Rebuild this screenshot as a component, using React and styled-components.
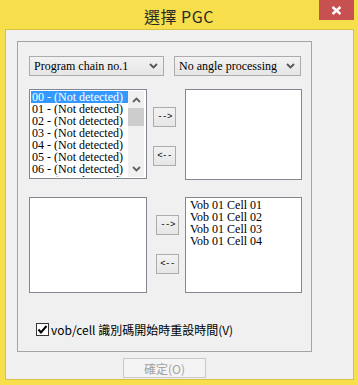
import React from "react";
import styled, { createGlobalStyle } from "styled-components";

const Global = createGlobalStyle`
  html, body { margin: 0; padding: 0; overflow: hidden; }
  body { font-family: "Noto Sans CJK TC", "Liberation Sans", sans-serif; }
  * { box-sizing: border-box; }
`;

const Window = styled.div`
  width: 358px;
  height: 385px;
  background: #f6df4a;
  display: flex;
  flex-direction: column;
  padding: 0 4px 5px 5px;
`;

const TitleBar = styled.div`
  height: 29px;
  display: grid;
  grid-template-columns: 35px 1fr 35px;
  align-items: start;
  margin: 0 -4px 0 -5px;
  padding: 0 4px 0 4px;
`;

const Title = styled.div`
  grid-column: 2;
  text-align: center;
  font-family: "Noto Sans CJK TC", "Liberation Sans", sans-serif;
  font-size: 16px;
  line-height: 16px;
  padding-top: 8px;
  color: #2b2b2b;
  letter-spacing: 0.5px;
`;

const CloseButton = styled.div`
  grid-column: 3;
  width: 35px;
  height: 20px;
  background: #c75050;
  display: flex;
  align-items: center;
  justify-content: center;
`;

const Client = styled.div`
  flex: 1;
  background: #f0f0f0;
  border: 1px solid #d8c243;
  padding: 11px 0 0 11px;
  display: flex;
  flex-direction: column;
  width: 349px;
`;

const GroupBox = styled.div`
  width: 295px;
  height: 311px;
  border: 1px solid #a5a5a5;
  padding: 14px 0 0 11px;
  display: flex;
  flex-direction: column;
`;

const ComboRow = styled.div`
  display: flex;
  gap: 10px;
`;

const Combo = styled.div`
  width: ${(p) => p.$w}px;
  height: 20px;
  border: 1px solid #acacac;
  background: linear-gradient(#f2f2f2, #e6e6e6);
  display: flex;
  align-items: center;
  justify-content: space-between;
  padding: 0 5px 0 4px;
  font-family: "Liberation Serif", "Noto Sans CJK TC", serif;
  font-size: 12px;
  color: #000;
`;

const ListRow = styled.div`
  display: flex;
  margin-top: ${(p) => p.$mt}px;
  align-items: flex-start;
`;

const ListBox = styled.div`
  width: ${(p) => p.$w}px;
  height: ${(p) => p.$h}px;
  border: 1px solid #828790;
  background: #fff;
  padding: 1px;
  display: flex;
  overflow: hidden;
  font-family: "Liberation Serif", "Noto Sans CJK TC", serif;
  font-size: 12px;
  color: #000;
`;

const Items = styled.div`
  flex: 1;
  display: flex;
  flex-direction: column;
  overflow: hidden;
  padding-left: ${(p) => p.$pl || 0}px;
`;

const Item = styled.div`
  height: 12px;
  line-height: 12px;
  flex-shrink: 0;
  padding-left: 1px;
  white-space: nowrap;
  overflow: hidden;
  background: ${(p) => (p.$sel ? "#3399ff" : "transparent")};
  color: ${(p) => (p.$sel ? "#fff" : "#000")};
`;

const ScrollBar = styled.div`
  width: 16px;
  background: #f0f0f0;
  display: flex;
  flex-direction: column;
  margin-right: 1px;
`;

const ScrollArrow = styled.div`
  height: 17px;
  display: flex;
  align-items: center;
  justify-content: center;
`;

const ScrollTrack = styled.div`
  flex: 1;
  display: flex;
  flex-direction: column;
`;

const Thumb = styled.div`
  height: 18px;
  background: #cdcdcd;
`;

const ButtonCol = styled.div`
  display: flex;
  flex-direction: column;
  gap: 19px;
  padding-top: 18px;
  margin: 0 ${(p) => p.$mr}px 0 ${(p) => p.$ml}px;
`;

const MoveButton = styled.div`
  width: 23px;
  height: 20px;
  border: 1px solid #acacac;
  background: linear-gradient(#f2f2f2, #e6e6e6);
  display: flex;
  align-items: center;
  justify-content: center;
  font-family: "Liberation Mono", monospace;
  font-size: 9px;
  color: #000;
  letter-spacing: -0.5px;
`;

const CheckRow = styled.label`
  display: flex;
  align-items: center;
  gap: 2px;
  margin-top: 30px;
  padding-left: 7px;
  font-family: "Noto Sans CJK TC", "Liberation Sans", sans-serif;
  font-size: 12px;
  line-height: 13px;
  color: #000;
`;

const CheckBox = styled.div`
  width: 13px;
  height: 13px;
  border: 1px solid #333;
  background: #fff;
  display: flex;
  align-items: center;
  justify-content: center;
`;

const Footer = styled.div`
  width: 295px;
  display: flex;
  justify-content: center;
  margin-top: 6px;
`;

const OkButton = styled.div`
  width: 83px;
  height: 20px;
  border: 1px solid #c8c8c8;
  background: #f4f4f4;
  display: flex;
  align-items: center;
  justify-content: center;
  font-family: "Noto Sans CJK TC", "Liberation Sans", sans-serif;
  font-size: 12px;
  color: #a3a3a3;
`;

const Chevron = ({ up, color = "#555" }) => (
  <svg width="9" height="6" viewBox="0 0 9 6">
    <polyline
      points={up ? "1,5 4.5,1.5 8,5" : "1,1 4.5,4.5 8,1"}
      fill="none"
      stroke={color}
      strokeWidth="1.8"
    />
  </svg>
);

const chains = Array.from({ length: 8 }, (_, i) => `${String(i).padStart(2, "0")} - (Not detected)`);
const cells = ["Vob 01 Cell 01", "Vob 01 Cell 02", "Vob 01 Cell 03", "Vob 01 Cell 04"];

export default function App() {
  return (
    <>
      <Global />
      <Window>
        <TitleBar>
          <Title>選擇 PGC</Title>
          <CloseButton>
            <svg width="11" height="9" viewBox="0 0 11 9">
              <path d="M1.5 1 L9.5 8 M9.5 1 L1.5 8" stroke="#fff" strokeWidth="2.4" />
            </svg>
          </CloseButton>
        </TitleBar>
        <Client>
          <GroupBox>
            <ComboRow>
              <Combo $w={135}>
                <span>Program chain no.1</span>
                <Chevron />
              </Combo>
              <Combo $w={127}>
                <span>No angle processing</span>
                <Chevron />
              </Combo>
            </ComboRow>
            <ListRow $mt={13}>
              <ListBox $w={118} $h={90}>
                <Items>
                  {chains.map((c, i) => (
                    <Item key={c} $sel={i === 0}>{c}</Item>
                  ))}
                </Items>
                <ScrollBar>
                  <ScrollArrow><Chevron up color="#606060" /></ScrollArrow>
                  <ScrollTrack>
                    <Thumb />
                  </ScrollTrack>
                  <ScrollArrow><Chevron color="#606060" /></ScrollArrow>
                </ScrollBar>
              </ListBox>
              <ButtonCol $ml={6} $mr={9}>
                <MoveButton>--&gt;</MoveButton>
                <MoveButton>&lt;--</MoveButton>
              </ButtonCol>
              <ListBox $w={117} $h={91} />
            </ListRow>
            <ListRow $mt={17}>
              <ListBox $w={118} $h={96} />
              <ButtonCol $ml={9} $mr={6}>
                <MoveButton>--&gt;</MoveButton>
                <MoveButton>&lt;--</MoveButton>
              </ButtonCol>
              <ListBox $w={117} $h={96}>
                <Items $pl={2}>
                  {cells.map((c) => (
                    <Item key={c}>{c}</Item>
                  ))}
                </Items>
              </ListBox>
            </ListRow>
            <CheckRow>
              <CheckBox>
                <svg width="11" height="11" viewBox="0 0 11 11">
                  <polyline points="1.5,5.5 4,8.5 9.5,2" fill="none" stroke="#000" strokeWidth="2" />
                </svg>
              </CheckBox>
              <span>vob/cell 識別碼開始時重設時間(V)</span>
            </CheckRow>
          </GroupBox>
          <Footer>
            <OkButton>確定(O)</OkButton>
          </Footer>
        </Client>
      </Window>
    </>
  );
}
